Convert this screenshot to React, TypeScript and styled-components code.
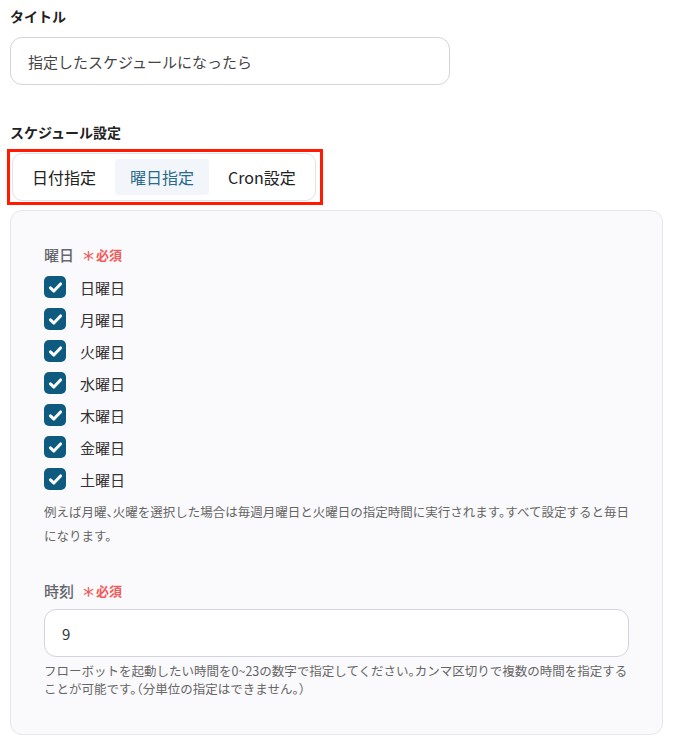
import { styled, createGlobalStyle } from "styled-components";

const GlobalStyle = createGlobalStyle`
  body {
    margin: 0;
    background: #ffffff;
    font-family: "Noto Sans CJK JP", "Noto Sans", sans-serif;
    color: #333;
  }
`;

const days = ["日曜日", "月曜日", "火曜日", "水曜日", "木曜日", "金曜日", "土曜日"];
const tabs = ["日付指定", "曜日指定", "Cron設定"];

export default function App() {
  return (
    <Page>
      <GlobalStyle />
      <SectionLabel>タイトル</SectionLabel>
      <TitleInput defaultValue="指定したスケジュールになったら" />

      <SectionLabel $top={37}>スケジュール設定</SectionLabel>
      <Highlight>
        <TabGroup>
          {tabs.map((t) => (
            <Tab key={t} $active={t === "曜日指定"}>
              {t}
            </Tab>
          ))}
        </TabGroup>
      </Highlight>

      <Panel>
        <FieldLabel>
          曜日
          <Required>
            <Star>*</Star>必須
          </Required>
        </FieldLabel>
        <CheckList>
          {days.map((d) => (
            <CheckRow key={d}>
              <CheckBox>
                <svg width="15" height="15" viewBox="0 0 14 14">
                  <polyline
                    points="2.3,7.3 5.5,10.3 11.7,3.7"
                    fill="none"
                    stroke="#fff"
                    strokeWidth="2.8"
                    strokeLinecap="round"
                    strokeLinejoin="round"
                  />
                </svg>
              </CheckBox>
              {d}
            </CheckRow>
          ))}
        </CheckList>
        <Help $lh={24} $top={5}>
          例えば月曜、火曜を選択した場合は毎週月曜日と火曜日の指定時間に実行されます。すべて設定すると毎日になります。
        </Help>

        <FieldLabel $top={32}>
          時刻
          <Required>
            <Star>*</Star>必須
          </Required>
        </FieldLabel>
        <TimeInput defaultValue="9" />
        <Help $lh={18} $top={5}>
          フローボットを起動したい時間を0~23の数字で指定してください。カンマ区切りで複数の時間を指定することが可能です。（分単位の指定はできません。）
        </Help>
      </Panel>
    </Page>
  );
}

const Page = styled.div`
  padding: 6px 12px 14px 10px;
  display: flex;
  flex-direction: column;
  align-items: flex-start;
`;

const SectionLabel = styled.div<{ $top?: number }>`
  margin-top: ${(p) => p.$top ?? 0}px;
  font-size: 14px;
  line-height: 20px;
  font-weight: 700;
  color: #222;
`;

const TitleInput = styled.input`
  margin-top: 11px;
  box-sizing: border-box;
  width: 440px;
  height: 48px;
  padding: 0 17px;
  border: 1px solid #d3d3de;
  border-radius: 12px;
  font-family: inherit;
  font-size: 15px;
  color: #444;
  background: #fff;
  outline: none;
`;

const Highlight = styled.div`
  margin-top: 7px;
  margin-left: -3px;
  border: 3px solid #ff1a00;
  padding: 1px 4px 1px 2px;
`;

const TabGroup = styled.div`
  display: flex;
  gap: 4px;
  padding: 5px 4px;
  border: 1px solid #e2e2e8;
  border-radius: 10px;
  background: #fff;
`;

const Tab = styled.div<{ $active?: boolean }>`
  height: 36px;
  padding: 0 15px;
  display: flex;
  align-items: center;
  font-size: 16px;
  border-radius: 4px;
  color: ${(p) => (p.$active ? "#2a6a8c" : "#222")};
  background: ${(p) => (p.$active ? "#f2f5f9" : "transparent")};
`;

const Panel = styled.div`
  margin-top: 5px;
  box-sizing: border-box;
  width: 653px;
  padding: 33px 33px 36px 33px;
  background: #faf9fc;
  border: 1px solid #e6e5eb;
  border-radius: 12px;
`;

const FieldLabel = styled.div<{ $top?: number }>`
  margin-top: ${(p) => p.$top ?? 0}px;
  display: flex;
  align-items: center;
  gap: 9px;
  font-size: 15px;
  line-height: 22px;
  font-weight: 500;
  color: #66666e;
`;

const Required = styled.span`
  display: inline-flex;
  align-items: center;
  font-size: 13px;
  font-weight: 700;
  color: #f25a5a;
`;

const Star = styled.span`
  display: inline-block;
  font-size: 22px;
  line-height: 0;
  margin-right: 2px;
  position: relative;
  top: 5px;
  font-family: "DejaVu Sans", sans-serif;
  font-weight: 400;
`;

const CheckList = styled.div`
  margin-top: 5px;
  display: flex;
  flex-direction: column;
`;

const CheckRow = styled.label`
  height: 32px;
  display: flex;
  align-items: center;
  gap: 14px;
  font-size: 15px;
  color: #333;
`;

const CheckBox = styled.span`
  width: 22px;
  height: 22px;
  border-radius: 5px;
  background: #0e5b7f;
  display: flex;
  align-items: center;
  justify-content: center;
`;

const Help = styled.p<{ $lh: number; $top?: number }>`
  margin: ${(p) => p.$top ?? 3}px 0 0;
  font-size: 12.5px;
  line-height: ${(p) => p.$lh}px;
  color: #666;
  font-feature-settings: "halt";
`;

const TimeInput = styled.input`
  margin-top: 7px;
  box-sizing: border-box;
  width: 100%;
  height: 48px;
  padding: 0 17px;
  border: 1px solid #d3d3de;
  border-radius: 12px;
  font-family: inherit;
  font-size: 15px;
  color: #333;
  background: #fff;
  outline: none;
`;
